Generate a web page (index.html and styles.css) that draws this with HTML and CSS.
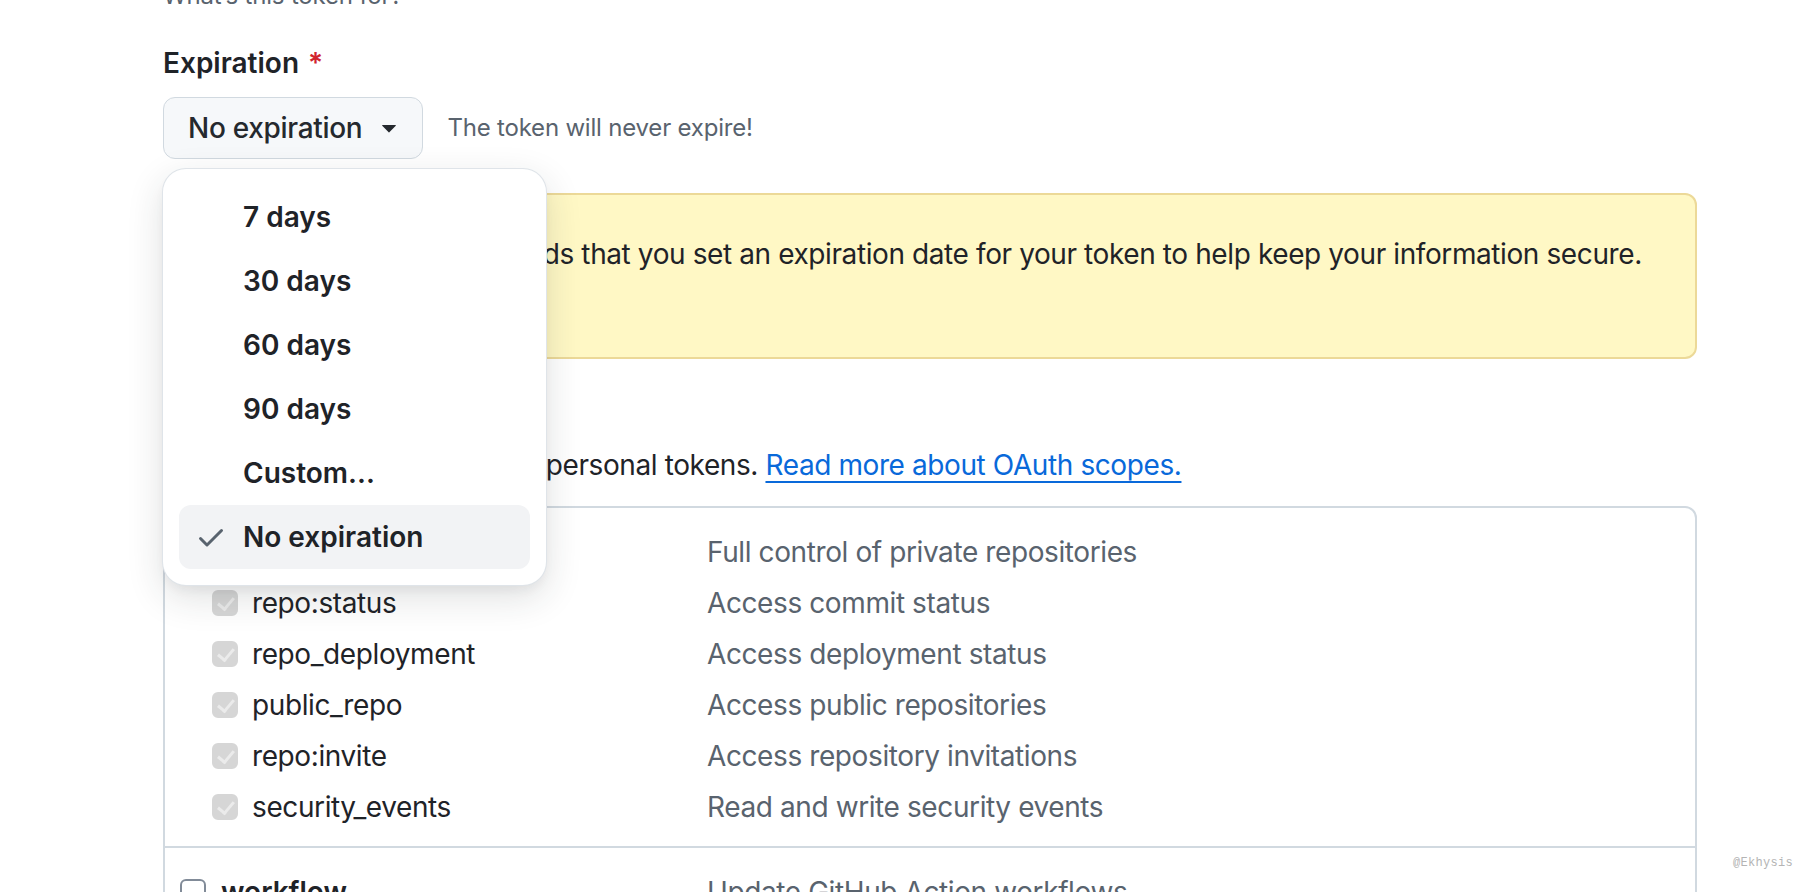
FILE: index.html
```html
<!DOCTYPE html>
<html lang="en">
<head>
<meta charset="utf-8">
<title>New personal access token</title>
<link rel="stylesheet" href="styles.css">
</head>
<body>
<main class="page">
  <p class="note top-note">What’s this token for?</p>

  <div class="field">
    <div class="label">Expiration <span class="req">*</span></div>
    <div class="exp-row">
      <div class="select-wrap">
        <button class="btn" type="button">
          <span>No expiration</span>
          <svg class="caret" width="14" height="8" viewBox="0 0 14 8" aria-hidden="true"><path d="M0.6 0h12.8a.5.5 0 0 1 .35.85L7.35 7.25a.5.5 0 0 1-.7 0L.25.85A.5.5 0 0 1 .6 0Z" fill="#25292e"/></svg>
        </button>
        <div class="menu" role="menu">
          <div class="item"><span class="check"></span><span>7 days</span></div>
          <div class="item"><span class="check"></span><span>30 days</span></div>
          <div class="item"><span class="check"></span><span>60 days</span></div>
          <div class="item"><span class="check"></span><span>90 days</span></div>
          <div class="item"><span class="check"></span><span>Custom...</span></div>
          <div class="item selected"><span class="check"><svg width="32" height="32" viewBox="0 0 16 16" aria-hidden="true"><path d="M13.78 4.22a.75.75 0 0 1 0 1.06l-7.25 7.25a.75.75 0 0 1-1.06 0L2.22 9.28a.751.751 0 0 1 .018-1.042.751.751 0 0 1 1.042-.018L6 10.94l6.72-6.72a.75.75 0 0 1 1.06 0Z" fill="#59636e"/></svg></span><span>No expiration</span></div>
        </div>
      </div>
      <span class="hint">The token will never expire!</span>
    </div>
  </div>

  <div class="flash">
    <span class="flash-line">GitHub strongly recommends that you set an expiration date for your token to help keep your information secure.</span>
    <a class="link" href="#">Learn more</a>
  </div>

  <div class="label scopes-title">Select scopes</div>
  <p class="desc">Scopes define the access for personal tokens. <a class="link" href="#">Read more about OAuth scopes.</a></p>

  <div class="scopes">
    <div class="group">
      <div class="row parent">
        <div class="name"><span class="cb on"></span><strong>repo</strong></div>
        <div class="what">Full control of private repositories</div>
      </div>
      <div class="row sub">
        <div class="name"><span class="cb dis"></span>repo:status</div>
        <div class="what">Access commit status</div>
      </div>
      <div class="row sub">
        <div class="name"><span class="cb dis"></span>repo_deployment</div>
        <div class="what">Access deployment status</div>
      </div>
      <div class="row sub">
        <div class="name"><span class="cb dis"></span>public_repo</div>
        <div class="what">Access public repositories</div>
      </div>
      <div class="row sub">
        <div class="name"><span class="cb dis"></span>repo:invite</div>
        <div class="what">Access repository invitations</div>
      </div>
      <div class="row sub">
        <div class="name"><span class="cb dis"></span>security_events</div>
        <div class="what">Read and write security events</div>
      </div>
    </div>
    <div class="group">
      <div class="row parent">
        <div class="name"><span class="cb"></span><strong>workflow</strong></div>
        <div class="what">Update GitHub Action workflows</div>
      </div>
    </div>
  </div>
</main>
<div class="watermark">@Ekhysis</div>
</body>
</html>
```

FILE: styles.css
```css
* { box-sizing: border-box; }

html, body {
  margin: 0;
  padding: 0;
  height: 892px;
  overflow: hidden;
  background: #ffffff;
}

body {
  font-family: "Inter", "Liberation Sans", sans-serif;
  font-size: 28px;
  line-height: 42px;
  letter-spacing: -0.4px;
  color: #1f2328;
  position: relative;
}

.page {
  width: 1534px;
  margin-left: 163px;
}

.note {
  margin: 0;
  font-size: 24px;
  line-height: 36px;
  letter-spacing: -0.2px;
  color: #59636e;
}

.top-note {
  margin-top: -22px;
}

.field {
  margin-top: 28px;
}

.label {
  font-weight: 600;
  font-size: 28px;
  line-height: 42px;
  letter-spacing: 0;
  color: #1f2328;
}

.req {
  color: #d1242f;
  margin-left: 2px;
}

.exp-row {
  display: flex;
  align-items: center;
  margin-top: 13px;
}

.select-wrap {
  position: relative;
}

.btn {
  display: flex;
  align-items: center;
  gap: 20px;
  height: 62px;
  padding: 0 26px 0 24px;
  background: #f6f8fa;
  border: 1px solid #d1d9e0;
  border-radius: 12px;
  font-family: inherit;
  font-size: 28px;
  font-weight: 500;
  letter-spacing: -0.3px;
  color: #25292e;
  line-height: 40px;
}

.caret {
  display: block;
  margin-top: 2px;
}

.hint {
  margin-left: 24px;
  font-size: 24px;
  line-height: 36px;
  letter-spacing: -0.2px;
  color: #59636e;
}

.menu {
  position: absolute;
  top: calc(100% + 9px);
  left: -1px;
  width: 385px;
  padding: 16px;
  background: #ffffff;
  border: 1px solid rgba(209, 217, 224, 0.7);
  border-radius: 24px;
  box-shadow: 0 12px 36px rgba(37, 41, 46, 0.14), 0 6px 12px -3px rgba(37, 41, 46, 0.06);
  z-index: 10;
}

.item {
  display: flex;
  align-items: center;
  gap: 16px;
  height: 64px;
  padding-left: 16px;
  border-radius: 12px;
  font-weight: 600;
  font-size: 28px;
  letter-spacing: 0;
  color: #1f2328;
}

.item.selected {
  background: #f2f3f5;
}

.check {
  display: flex;
  width: 32px;
  height: 32px;
}

.flash {
  margin-top: 34px;
  padding: 38px 30px 40px 32px;
  background: #fff8c5;
  border: 2px solid #ecd998;
  border-radius: 12px;
}

.flash-line {
  display: block;
  white-space: nowrap;
}

.link {
  color: #0969da;
  text-decoration: underline;
  text-underline-offset: 6px;
  text-decoration-thickness: 2px;
}

.scopes-title {
  margin-top: 22px;
}

.desc {
  margin: 21px 0 20px;
}

.scopes {
  border: 2px solid #d1d9e0;
  border-radius: 12px;
}

.group {
  padding: 18px 0 14px 15px;
}

.group + .group {
  border-top: 2px solid #d1d9e0;
}

.row {
  display: grid;
  grid-template-columns: 527px 1fr;
  height: 51px;
  align-items: center;
}

.name {
  display: flex;
  align-items: center;
  gap: 15px;
}

.row.sub .name {
  padding-left: 32px;
  gap: 14px;
}

.name strong {
  font-weight: 600;
  letter-spacing: 0;
}

.what {
  color: #59636e;
}

.cb {
  flex: none;
  width: 26px;
  height: 26px;
  border: 2px solid #818b98;
  border-radius: 6px;
  background: #ffffff;
  position: relative;
}

.cb.on {
  background: #0969da;
  border-color: #0969da;
}

.cb.dis {
  background: #d6d6d6;
  border-color: #d6d6d6;
}

.cb.on::after,
.cb.dis::after {
  content: "";
  position: absolute;
  left: 7px;
  top: 2px;
  width: 7px;
  height: 13px;
  border: solid #ffffff;
  border-width: 0 3px 3px 0;
  transform: rotate(40deg);
}

.cb.dis::after {
  border-color: #ebebeb;
}

.watermark {
  position: absolute;
  left: 1733px;
  top: 855px;
  font-family: "Liberation Mono", monospace;
  font-size: 12px;
  line-height: 16px;
  letter-spacing: 0.3px;
  color: #b4b4b4;
}
```
